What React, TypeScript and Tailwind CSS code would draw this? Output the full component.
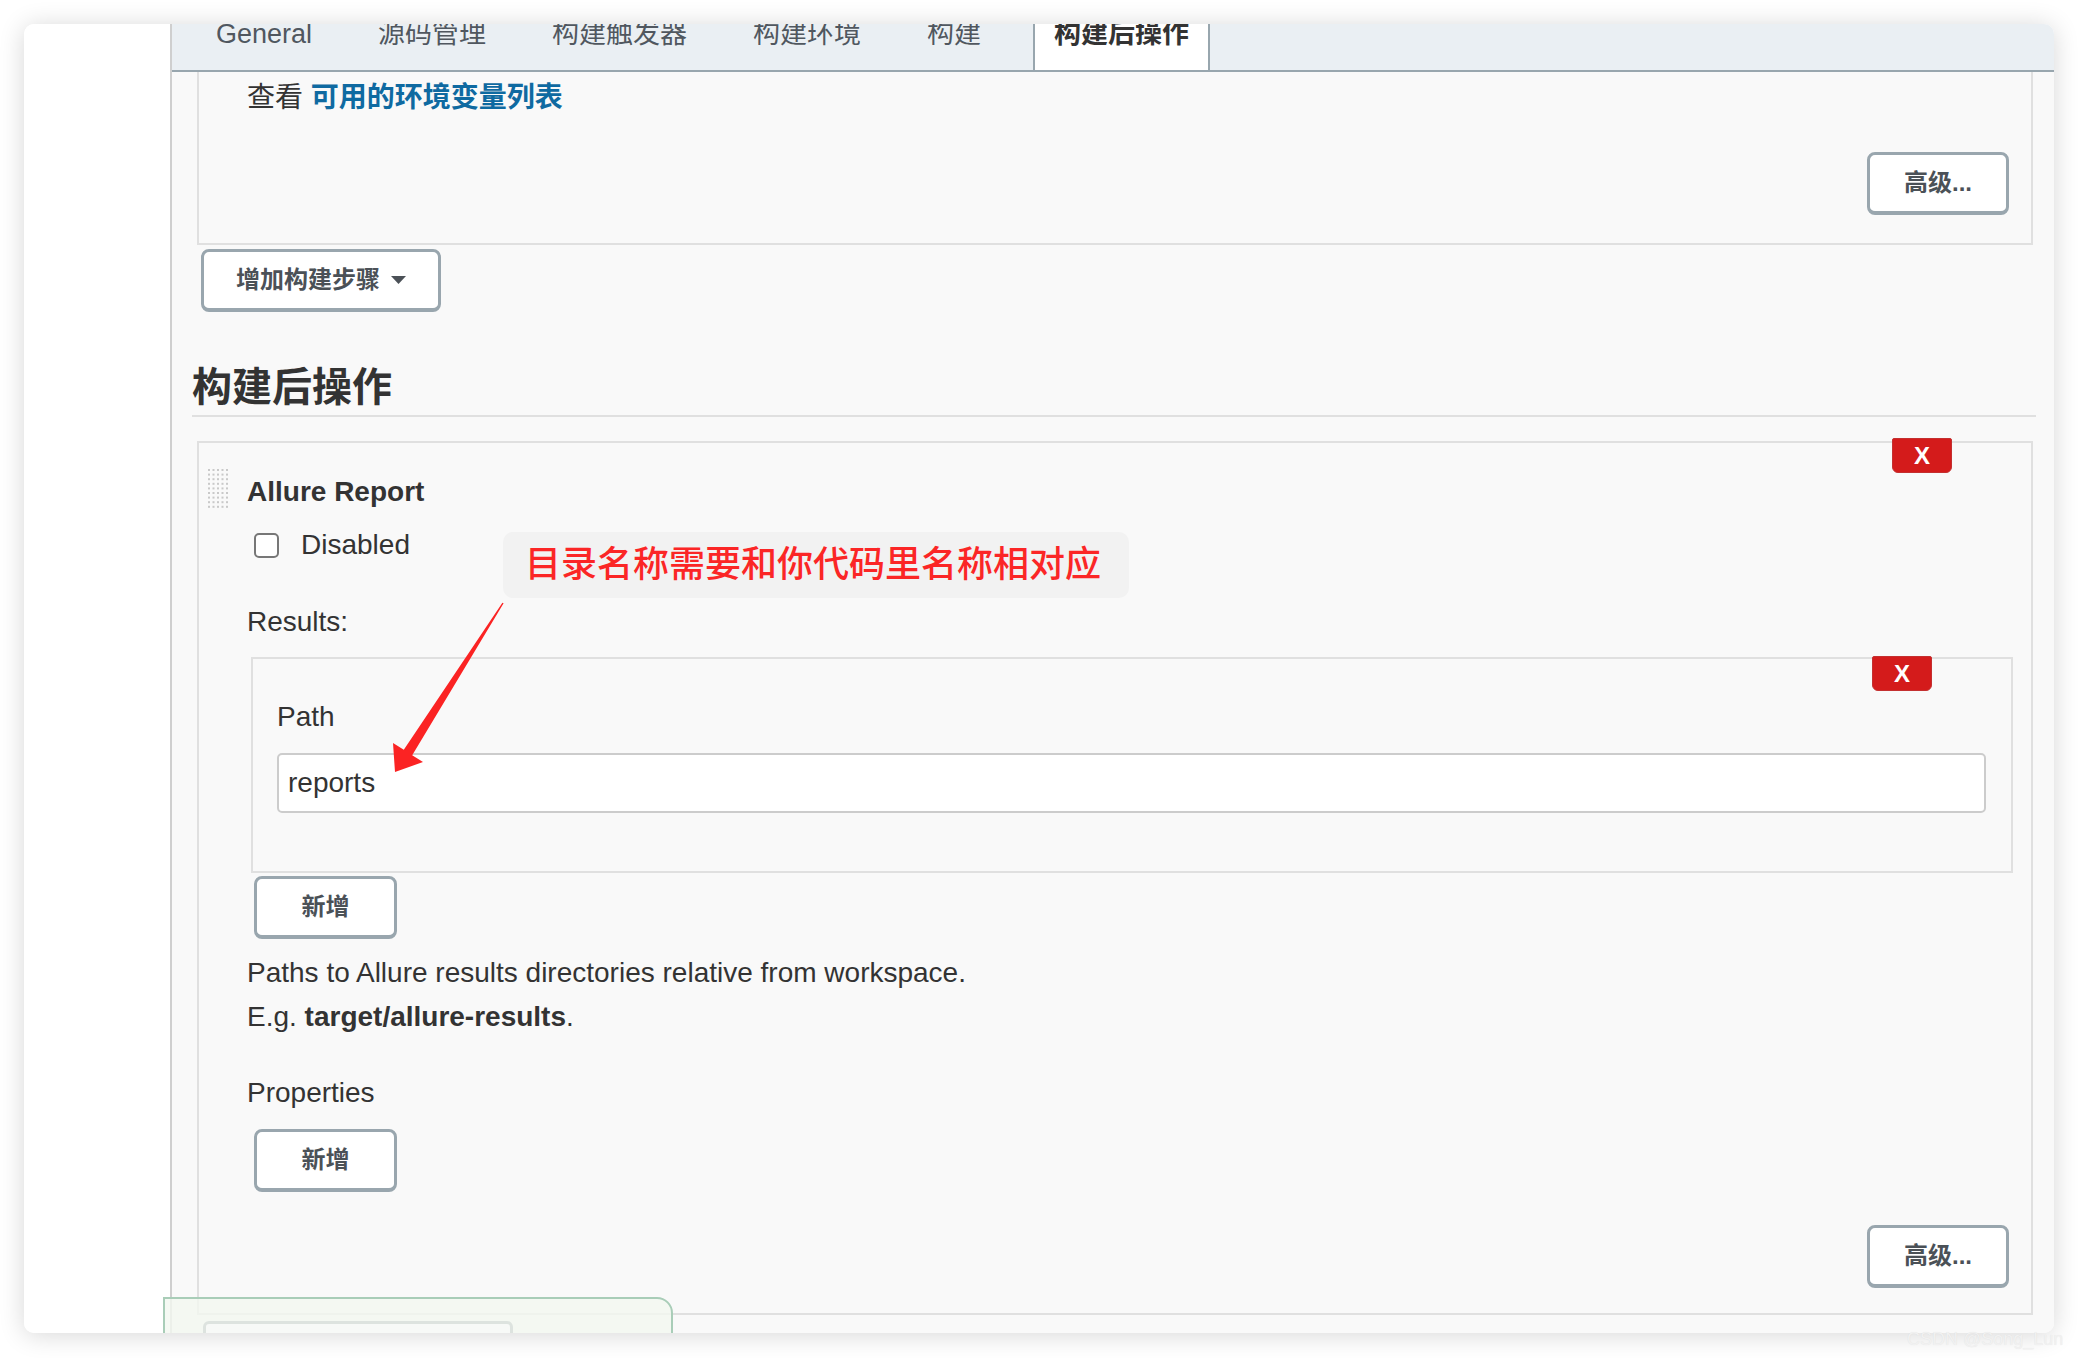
import React from "react"

const font = "font-['Liberation_Sans','Noto_Sans_CJK_SC',sans-serif]"

function JButton({ label, width, caret }: { label: string; width: string; caret?: boolean }) {
  return (
    <button
      className={`flex h-[63px] ${width} items-center justify-center gap-[11px] rounded-[8px] border-[3px] border-b-4 border-[#99a6ae] bg-white text-[24px] font-semibold text-[#4b5157]`}
    >
      <span>{label}</span>
      {caret && (
        <svg width="15" height="8" viewBox="0 0 15 8">
          <path d="M0 0 H15 L7.5 8 Z" fill="#4b5157" />
        </svg>
      )}
    </button>
  )
}

function DeleteButton({ className }: { className: string }) {
  return (
    <div
      className={`absolute flex h-[35px] w-[60px] items-center justify-center rounded-t-[2px] rounded-b-[6px] border border-[#c43030] bg-[#d41b1b] text-[24px] font-bold leading-none text-white ${className}`}
    >
      X
    </div>
  )
}

function Grip() {
  const dots = []
  for (let r = 0; r < 9; r++) {
    for (let c = 0; c < 5; c++) {
      dots.push(<rect key={`${r}-${c}`} x={1 + c * 4.5} y={1 + r * 4.6} width="2" height="2" fill="#c9c9c9" />)
    }
  }
  return (
    <svg width="23" height="42" viewBox="0 0 23 42">
      {dots}
    </svg>
  )
}

export default function App() {
  const tabs = ["General", "源码管理", "构建触发器", "构建环境", "构建"]

  return (
    <div className={`relative h-[1358px] w-[2078px] overflow-hidden bg-white p-[24px] text-[#333] ${font}`}>
      <div className="relative flex h-[1309px] w-[2030px] overflow-hidden rounded-[10px] bg-white shadow-[0_2px_26px_rgba(0,0,0,0.16)]">
        {/* sidebar */}
        <div className="w-[148px] shrink-0 border-r-2 border-[#cfcfcf] bg-white" />

        {/* main */}
        <div className="min-w-0 flex-1 bg-[#f9f9f9]">
          {/* tabs, top edge scrolled out of view */}
          <div className="flex h-[48px] overflow-hidden border-b-2 border-[#98a6ae] bg-[#eaeff3] pl-[11px]">
            {tabs.map((t) => (
              <div key={t} className="h-full px-[33px] text-[27px] leading-[27px] text-[#50575f]">
                <span className="-mt-[3px] block">{t}</span>
              </div>
            ))}
            <div className="ml-[19px] h-full border-x-2 border-[#98a6ae] bg-white px-[19px] text-[27px] font-bold leading-[27px] text-[#333]">
              <span className="-mt-[3px] block">构建后操作</span>
            </div>
          </div>

          <div className="pl-[25px] pr-[21px]">
            {/* previous build step (scrolled) */}
            <div className="border-x-2 border-b-2 border-[#e0e0e0] bg-[#f9f9f9] pt-[6px] pb-[28px] pl-[48px] pr-[22px]">
              <div className="text-[28px] leading-[40px]">
                查看 <span className="font-bold text-[#0f6aa1]">可用的环境变量列表</span>
              </div>
              <div className="mt-[34px] flex justify-end">
                <JButton label="高级..." width="w-[142px]" />
              </div>
            </div>

            <div className="mt-[4px] ml-[4px]">
              <JButton label="增加构建步骤" width="w-[240px]" caret />
            </div>

            <h2 className="mt-[47px] -ml-[5px] -mr-[3px] border-b-2 border-[#e0e0e0] text-[40px] font-bold leading-[56px] text-[#333]">
              构建后操作
            </h2>

            {/* Allure Report */}
            <div className="relative mt-[24px] flex border-2 border-[#e0e0e0] bg-[#f9f9f9]">
              <DeleteButton className="right-[79px] -top-[5px]" />
              <div className="mt-[25px] ml-[8px] w-[23px] shrink-0">
                <Grip />
              </div>
              <div className="ml-[17px] flex min-w-0 flex-1 flex-col pt-[29px] pr-[18px] pb-[25px] text-[28px]">
                <div className="font-bold leading-[40px]">Allure Report</div>

                <div className="mt-[13px] flex h-[40px] items-center">
                  <div className="ml-[7px] h-[25px] w-[25px] rounded-[5px] border-2 border-[#777] bg-white" />
                  <span className="ml-[22px]">Disabled</span>
                </div>

                <div className="mt-[37px] leading-[40px]">Results:</div>

                <div className="relative mt-[15px] ml-[4px] border-2 border-[#e0e0e0] pt-[38px] pr-[25px] pb-[58px] pl-[24px]">
                  <DeleteButton className="right-[79px] -top-[3px]" />
                  <div className="leading-[40px]">Path</div>
                  <input
                    readOnly
                    defaultValue="reports"
                    className="mt-[16px] block h-[60px] w-full rounded-[5px] border-2 border-[#cccccc] bg-white pl-[9px] text-[28px] text-[#333] outline-none"
                  />
                </div>

                <div className="mt-[3px] ml-[7px]">
                  <JButton label="新增" width="w-[143px]" />
                </div>

                <div className="mt-[12px] leading-[44px]">
                  <div>Paths to Allure results directories relative from workspace.</div>
                  <div>
                    E.g. <span className="font-bold">target/allure-results</span>.
                  </div>
                </div>

                <div className="mt-[34px] leading-[40px]">Properties</div>

                <div className="mt-[16px] ml-[7px]">
                  <JButton label="新增" width="w-[143px]" />
                </div>

                <div className="mt-[33px] mr-[4px] flex justify-end">
                  <JButton label="高级..." width="w-[142px]" />
                </div>
              </div>
            </div>
          </div>
        </div>

        {/* floating save bar, cut off at the bottom */}
        <div className="absolute top-[1273px] left-[139px] h-[80px] w-[510px] rounded-tr-[16px] border-2 border-[#a9cdb8] bg-[#f2f7f0]/80">
          <div className="mt-[22px] ml-[38px] h-[40px] w-[310px] rounded-t-[6px] border-[3px] border-[#dde3df] bg-[#f7f9f7]" />
        </div>

        {/* annotation */}
        <div className="absolute top-[508px] left-[479px] flex h-[66px] w-[626px] items-center rounded-[10px] bg-[#f2f2f2] pl-[22px] text-[36px] font-medium text-[#fb2626]">
          目录名称需要和你代码里名称相对应
        </div>
        <svg className="pointer-events-none absolute top-0 left-0" width="2030" height="1309" viewBox="0 0 2030 1309">
          <polygon
            points="479.6,579.3 478.4,578.7 379.8,725.8 369,719 371,748 399,738 388.2,731.2"
            fill="#fb2323"
          />
        </svg>
      </div>

      <div className="absolute top-[1326px] left-[1907px] text-[18px] text-[#f1f1f1] [text-shadow:0_0_1px_rgba(0,0,0,0.08)]">
        CSDN @Song_Lun
      </div>
    </div>
  )
}
